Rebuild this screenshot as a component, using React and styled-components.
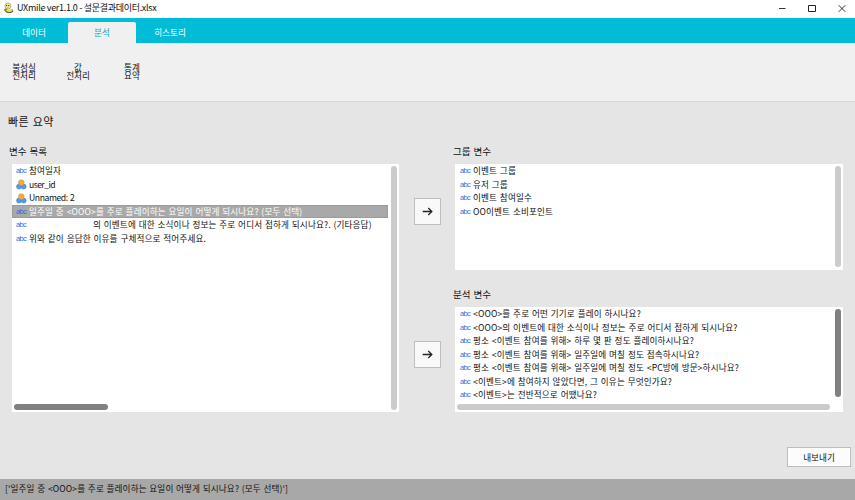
import React from 'react';
import styled, { createGlobalStyle } from 'styled-components';

const Global = createGlobalStyle`
  * { box-sizing: border-box; }
  body { margin: 0; overflow: hidden; }
  button { font: inherit; padding: 0; }
`;

const Window = styled.div`
  width: 855px;
  height: 500px;
  display: flex;
  flex-direction: column;
  background: #e5e5e5;
  color: #111;
  font-family: 'Noto Sans CJK KR', 'Noto Sans', sans-serif;
  font-size: 8.6px;
  line-height: 13.5px;
  white-space: pre;
`;

const TitleBar = styled.header`
  height: 18px;
  display: flex;
  align-items: center;
  padding: 0 9px 2px 3px;
  background: #fff;
`;

const Title = styled.h1`
  flex: 1;
  margin: 0 0 0 3px;
  font-size: 9px;
  font-weight: 400;
  letter-spacing: -0.3px;
`;

const WindowButtons = styled.div`
  display: flex;
  gap: 22px;
  padding-bottom: 1px;
`;

const Tabs = styled.nav`
  height: 25px;
  display: flex;
  align-items: flex-end;
  background: #00bcd6;
`;

const Tab = styled.button`
  width: 68px;
  height: 21.5px;
  border: 0;
  border-radius: 2px 2px 0 0;
  background: ${(p) => (p.$active ? '#f0f0f0' : 'transparent')};
  color: ${(p) => (p.$active ? '#12a9bd' : '#fff')};
  line-height: 20px;
`;

const Ribbon = styled.div`
  height: 59px;
  display: flex;
  padding: 19px 0 0 0;
  background: #f0f0f0;
  border-bottom: 1px solid #d8d8d8;
`;

const Tool = styled.button`
  width: ${(p) => p.$w || 54}px;
  height: 17px;
  border: 0;
  background: none;
  color: #111;
  text-align: center;
  line-height: 8px;
`;

const Main = styled.main`
  height: 377px;
  display: flex;
  flex-direction: column;
  padding: 11px 4px 0 8px;
`;

const Heading = styled.h2`
  margin: 0;
  height: 18px;
  font-size: 11px;
  font-weight: 400;
  line-height: 17px;
  letter-spacing: 0.3px;
  word-spacing: 1.2px;
`;

const Columns = styled.div`
  display: grid;
  grid-template-columns: 391px 56px 388px;
  height: 281px;
`;

const Column = styled.section`
  display: flex;
  flex-direction: column;
  padding-left: ${(p) => p.$indent || 0}px;
`;

const Label = styled.h3`
  margin: ${(p) => p.$top}px 0 6px ${(p) => p.$left}px;
  height: 14px;
  font-size: 9.5px;
  font-weight: 400;
  line-height: 14px;
  word-spacing: 0.8px;
`;

const List = styled.div`
  height: ${(p) => p.$h}px;
  display: grid;
  grid-template-columns: 1fr 6px;
  grid-template-rows: 1fr 6px;
  column-gap: 3px;
  padding: 0 2px 2px 0;
  background: #fff;
`;

const Rows = styled.ul`
  margin: 0;
  padding: 0.5px 0 0;
  list-style: none;
  min-height: 0;
  min-width: 0;
`;

const Row = styled.li`
  height: 13.45px;
  display: flex;
  align-items: center;
  padding-left: ${(p) => p.$pad || 4}px;
  background: ${(p) => (p.$selected ? '#a9a9a9' : 'transparent')};
  box-shadow: ${(p) => (p.$selected ? 'inset 0 0 0 1px #9c9c9c' : 'none')};
  color: ${(p) => (p.$selected ? '#fff' : '#111')};
`;

const RowText = styled.span`
  margin-left: ${(p) => p.$indent || 3}px;
  letter-spacing: ${(p) => p.$ls || 0.13}px;
  word-spacing: 0.7px;
`;

const Abc = styled.span`
  width: 10px;
  color: #2f72d8;
  font-family: 'Liberation Sans', sans-serif;
  font-size: 7.5px;
  letter-spacing: -0.7px;
`;

const VBar = styled.div`
  grid-column: 2;
  grid-row: 1 / 3;
  width: 6px;
  height: ${(p) => p.$h}px;
  margin-top: 2px;
  border-radius: 3px;
  background: ${(p) => (p.$dark ? '#808080' : '#cbcbcb')};
`;

const HBar = styled.div`
  grid-column: 1;
  grid-row: 2;
  width: ${(p) => p.$w}px;
  height: 6px;
  margin-left: 2px;
  border-radius: 3px;
  background: ${(p) => (p.$dark ? '#808080' : '#cbcbcb')};
`;

const Movers = styled.div`
  display: flex;
  flex-direction: column;
  gap: 116px;
  padding: 67px 0 0 15px;
`;

const MoveButton = styled.button`
  width: 27px;
  height: 27px;
  display: grid;
  place-items: center;
  background: #f9f9f9;
  border: 1px solid #bdbdbd;
`;

const ExportButton = styled.button`
  align-self: flex-end;
  width: 64px;
  height: 20px;
  margin-top: 35px;
  background: #fcfcfc;
  border: 1px solid #bdbdbd;
  color: #111;
  line-height: 18px;
`;

const Status = styled.footer`
  height: 21px;
  padding-left: 5px;
  background: #a8a8a8;
  line-height: 18px;
  letter-spacing: 0.1px;
  word-spacing: 0.7px;
`;

const AppLogo = () => (
  <svg width="11" height="12" viewBox="0 0 11 12">
    <path d="M1 8 2.2 6.2 5 8 9.8 7.4 10.3 9.5 8 11 3.5 10.8Z" fill="#55582f" />
    <path d="M2 7.3c1.5.2 2.4.9 4 .6l3.5-.3c.6 1.4-.8 2.4-3.2 2.3C4 9.8 2.4 9 2 7.3Z" fill="#e8dc55" />
    <circle cx="5" cy="4" r="3" fill="#f4ec86" stroke="#8f8d63" strokeWidth=".6" />
    <circle cx="3.6" cy="3.6" r=".7" fill="#333" />
    <circle cx="5.7" cy="3.6" r=".7" fill="#333" />
    <path d="M3.8 5h2l-.8.9Z" fill="#df9d28" />
  </svg>
);

const GroupIcon = () => (
  <svg width="11" height="11" viewBox="0 0 11 11">
    <circle cx="3" cy="7.6" r="2.5" fill="#5596ea" stroke="#3f7dce" strokeWidth=".5" />
    <circle cx="7.7" cy="7.6" r="2.5" fill="#5596ea" stroke="#3f7dce" strokeWidth=".5" />
    <circle cx="5.3" cy="3.6" r="2.9" fill="#efad40" stroke="#cf902c" strokeWidth=".5" />
  </svg>
);

const Arrow = () => (
  <svg width="11" height="9" viewBox="0 0 11 9" fill="none" stroke="#222" strokeWidth="1.3">
    <path d="M.7 4.5h9M6.3 1l3.5 3.5L6.3 8" />
  </svg>
);

const variables = [
  { text: '참여일자' },
  { text: 'user_id', group: true, ls: -0.55 },
  { text: 'Unnamed: 2', group: true, ls: -0.4 },
  { text: '일주일 중 <OOO>를 주로 플레이하는 요일이 어떻게 되시나요? (모두 선택)', selected: true },
  { text: '의 이벤트에 대한 소식이나 정보는 주로 어디서 접하게 되시나요?. (기타응답)', indent: 67 },
  { text: '위와 같이 응답한 이유를 구체적으로 적어주세요.' },
];

const groupVariables = [
  { text: '이벤트 그룹' },
  { text: '유저 그룹' },
  { text: '이벤트 참여일수' },
  { text: 'OO이벤트 소비포인트' },
];

const analysisVariables = [
  { text: '<OOO>를 주로 어떤 기기로 플레이 하시나요?' },
  { text: '<OOO>의 이벤트에 대한 소식이나 정보는 주로 어디서 접하게 되시나요?' },
  { text: '평소 <이벤트 참여를 위해> 하루 몇 판 정도 플레이하시나요?' },
  { text: '평소 <이벤트 참여를 위해> 일주일에 며칠 정도 접속하시나요?' },
  { text: '평소 <이벤트 참여를 위해> 일주일에 며칠 정도 <PC방에 방문>하시나요?' },
  { text: '<이벤트>에 참여하지 않았다면, 그 이유는 무엇인가요?' },
  { text: '<이벤트>는 전반적으로 어땠나요?' },
];

const VariableRows = ({ items, pad }) => (
  <Rows>
    {items.map((item) => (
      <Row key={item.text} $selected={item.selected} $pad={pad}>
        {item.group ? <GroupIcon /> : <Abc>abc</Abc>}
        <RowText $indent={item.indent || (item.group ? 2 : 3)} $ls={item.ls}>{item.text}</RowText>
      </Row>
    ))}
  </Rows>
);

export default function App() {
  return (
    <Window>
      <Global />
      <TitleBar>
        <AppLogo />
        <Title>UXmile ver1.1.0 - 설문결과데이터.xlsx</Title>
        <WindowButtons>
          <svg width="8" height="8" viewBox="0 0 8 8"><path d="M1 4.5h6.5" stroke="#333" /></svg>
          <svg width="8" height="8" viewBox="0 0 8 8"><path d="M.5 1.5h7v6h-7Z" fill="none" stroke="#222" /></svg>
          <svg width="8" height="8" viewBox="0 0 8 8"><path d="m.7 1.2 6.6 6.6M7.3 1.2.7 7.8" stroke="#333" /></svg>
        </WindowButtons>
      </TitleBar>
      <Tabs>
        <Tab>데이터</Tab>
        <Tab $active>분석</Tab>
        <Tab>히스토리</Tab>
      </Tabs>
      <Ribbon>
        <Tool $w={48}>{'불성실\n전처리'}</Tool>
        <Tool $w={60}>{'값\n전처리'}</Tool>
        <Tool $w={48}>{'통계\n요약'}</Tool>
      </Ribbon>
      <Main>
        <Heading>빠른 요약</Heading>
        <Columns>
          <Column $indent={4}>
            <Label $top={13} $left={-3}>변수 목록</Label>
            <List $h={248}>
              <VariableRows items={variables} />
              <VBar $h={244} />
              <HBar $w={94} $dark />
            </List>
          </Column>
          <Movers>
            <MoveButton><Arrow /></MoveButton>
            <MoveButton><Arrow /></MoveButton>
          </Movers>
          <Column>
            <Label $top={13} $left={-2}>그룹 변수</Label>
            <List $h={106}>
              <VariableRows items={groupVariables} pad={5} />
              <VBar $h={101} />
            </List>
            <Label $top={17} $left={-2}>분석 변수</Label>
            <List $h={105}>
              <VariableRows items={analysisVariables} pad={5} />
              <VBar $h={88} $dark />
              <HBar $w={373} />
            </List>
          </Column>
        </Columns>
        <ExportButton>내보내기</ExportButton>
      </Main>
      <Status>['일주일 중 &lt;OOO&gt;를 주로 플레이하는 요일이 어떻게 되시나요? (모두 선택)']</Status>
    </Window>
  );
}
